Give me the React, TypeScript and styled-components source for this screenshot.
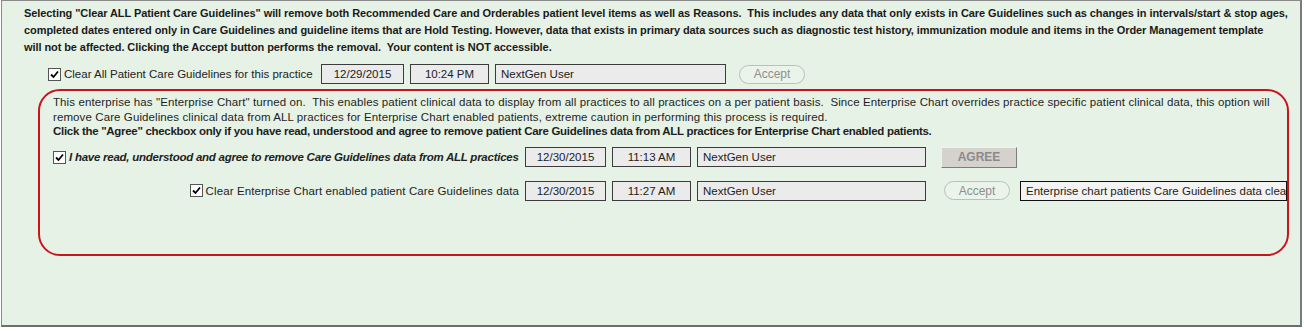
import styled, { createGlobalStyle } from "styled-components";

const GlobalStyle = createGlobalStyle`
  html, body {
    margin: 0;
    padding: 0;
    background: #ffffff;
  }
  body {
    font-family: "Liberation Sans", Arial, sans-serif;
    color: #1e1e1e;
  }
`;

const Frame = styled.div`
  box-sizing: border-box;
  width: 1301px;
  height: 327px;
  margin-left: 1px;
  padding-top: 4px;
  background: #e6f2e6;
  border: 1px solid #8a8a8a;
  border-bottom: 2px solid #6e6e6e;
  border-right: 2px solid #7a7a7a;
`;

const Notice = styled.div`
  margin-left: 22px;
  font-size: 11px;
  font-weight: bold;
  letter-spacing: -0.08px;
  line-height: 17px;
  color: #1a1a1a;
`;

const Line = styled.div<{ $bold?: boolean }>`
  white-space: nowrap;
  font-weight: ${(p) => (p.$bold ? "bold" : "inherit")};
  letter-spacing: ${(p) => (p.$bold ? "-0.3px" : "inherit")};
`;

const PracticeRow = styled.div`
  display: flex;
  align-items: center;
  height: 20px;
  margin: 8px 0 0 46px;
`;

const CheckGroup = styled.label<{ $width: number; $right?: boolean }>`
  display: flex;
  align-items: center;
  justify-content: ${(p) => (p.$right ? "flex-end" : "flex-start")};
  gap: 3px;
  width: ${(p) => p.$width}px;
  flex-shrink: 0;
  white-space: nowrap;
`;

const Box = styled.span`
  box-sizing: border-box;
  width: 13px;
  height: 13px;
  flex-shrink: 0;
  background: #ffffff;
  border: 1px solid #555555;
  display: flex;
  align-items: center;
  justify-content: center;
`;

const LabelText = styled.span<{ $strong?: boolean; $ls?: number }>`
  font-size: 11.5px;
  letter-spacing: ${(p) => (p.$strong ? -0.25 : p.$ls ?? 0.1)}px;
  font-weight: ${(p) => (p.$strong ? "bold" : "normal")};
  font-style: ${(p) => (p.$strong ? "italic" : "normal")};
  color: #222222;
`;

const Field = styled.div<{ $width: number; $align?: string; $light?: boolean; $ml?: number }>`
  box-sizing: border-box;
  width: ${(p) => p.$width}px;
  height: 20px;
  margin-left: ${(p) => p.$ml ?? 6}px;
  flex-shrink: 0;
  background: ${(p) => (p.$light ? "#f3f3f3" : "#ebebeb")};
  border: 1px solid ${(p) => (p.$light ? "#111111" : "#3c3c3c")};
  font-size: 11.5px;
  line-height: 18px;
  text-align: ${(p) => p.$align ?? "center"};
  padding: 0 5px;
  white-space: nowrap;
  overflow: hidden;
  color: #222222;
`;

const PillButton = styled.button<{ $ml: number }>`
  box-sizing: border-box;
  width: 66px;
  height: 19px;
  margin-left: ${(p) => p.$ml}px;
  flex-shrink: 0;
  background: #eaf4ea;
  border: 1px solid #b9c2b9;
  border-radius: 10px;
  font-family: "Liberation Sans", Arial, sans-serif;
  font-size: 12px;
  color: #8e8e8e;
  padding: 0;
`;

const AgreeButton = styled.button`
  box-sizing: border-box;
  width: 76px;
  height: 21px;
  margin-left: 15px;
  flex-shrink: 0;
  background: #d5d2cd;
  border: 1px solid;
  border-color: #f0f0f0 #7d7d7d #7d7d7d #f0f0f0;
  font-family: "Liberation Sans", Arial, sans-serif;
  font-size: 12px;
  font-weight: bold;
  color: #8a8a8a;
  padding: 0;
`;

const EnterpriseBox = styled.div`
  box-sizing: border-box;
  width: 1251px;
  height: 167px;
  margin: 5px 0 0 36px;
  padding: 4px 0 0 13px;
  border: 2px solid #c8141e;
  border-radius: 22px;
`;

const EnterpriseText = styled.div`
  font-size: 11.5px;
  letter-spacing: 0.1px;
  line-height: 14.5px;
  color: #1e1e1e;
`;

const GridRow = styled.div<{ $mt: number; $h: number }>`
  display: flex;
  align-items: center;
  height: ${(p) => p.$h}px;
  margin-top: ${(p) => p.$mt}px;
`;

const Check = () => (
  <Box>
    <svg width="9" height="9" viewBox="0 0 9 9">
      <path d="M1 4.5 L3.5 7 L8 1.5" fill="none" stroke="#000" strokeWidth="1.8" />
    </svg>
  </Box>
);

export default function App() {
  return (
    <>
      <GlobalStyle />
      <Frame>
        <Notice>
          <Line>
            Selecting "Clear ALL Patient Care Guidelines" will remove both Recommended Care and Orderables patient level
            items as well as Reasons.&nbsp; This includes any data that only exists in Care Guidelines such as changes in
            intervals/start &amp; stop ages,
          </Line>
          <Line>
            completed dates entered only in Care Guidelines and guideline items that are Hold Testing. However, data that
            exists in primary data sources such as diagnostic test history, immunization module and items in the Order
            Management template
          </Line>
          <Line>
            will not be affected. Clicking the Accept button performs the removal.&nbsp; Your content is NOT accessible.
          </Line>
        </Notice>

        <PracticeRow>
          <CheckGroup $width={266}>
            <Check />
            <LabelText $ls={0}>Clear All Patient Care Guidelines for this practice</LabelText>
          </CheckGroup>
          <Field $width={83} $ml={7}>12/29/2015</Field>
          <Field $width={79}>10:24 PM</Field>
          <Field $width={231} $align="left">NextGen User</Field>
          <PillButton $ml={13}>Accept</PillButton>
        </PracticeRow>

        <EnterpriseBox>
          <EnterpriseText>
            <Line>
              This enterprise has "Enterprise Chart" turned on.&nbsp; This enables patient clinical data to display from
              all practices to all practices on a per patient basis.&nbsp; Since Enterprise Chart overrides practice
              specific patient clinical data, this option will
            </Line>
            <Line>
              remove Care Guidelines clinical data from ALL practices for Enterprise Chart enabled patients, extreme
              caution in performing this process is required.
            </Line>
            <Line $bold>
              Click the "Agree" checkbox only if you have read, understood and agree to remove patient Care Guidelines
              data from ALL practices for Enterprise Chart enabled patients.
            </Line>
          </EnterpriseText>

          <GridRow $mt={8} $h={21}>
            <CheckGroup $width={466}>
              <Check />
              <LabelText $strong>I have read, understood and agree to remove Care Guidelines data from ALL practices</LabelText>
            </CheckGroup>
            <Field $width={81}>12/30/2015</Field>
            <Field $width={79}>11:13 AM</Field>
            <Field $width={229} $align="left">NextGen User</Field>
            <AgreeButton>AGREE</AgreeButton>
          </GridRow>

          <GridRow $mt={13} $h={20}>
            <CheckGroup $width={466} $right>
              <Check />
              <LabelText>Clear Enterprise Chart enabled patient Care Guidelines data</LabelText>
            </CheckGroup>
            <Field $width={81}>12/30/2015</Field>
            <Field $width={79}>11:27 AM</Field>
            <Field $width={229} $align="left">NextGen User</Field>
            <PillButton $ml={18}>Accept</PillButton>
            <Field $width={267} $ml={10} $align="left" $light>
              Enterprise chart patients Care Guidelines data clea
            </Field>
          </GridRow>
        </EnterpriseBox>
      </Frame>
    </>
  );
}
